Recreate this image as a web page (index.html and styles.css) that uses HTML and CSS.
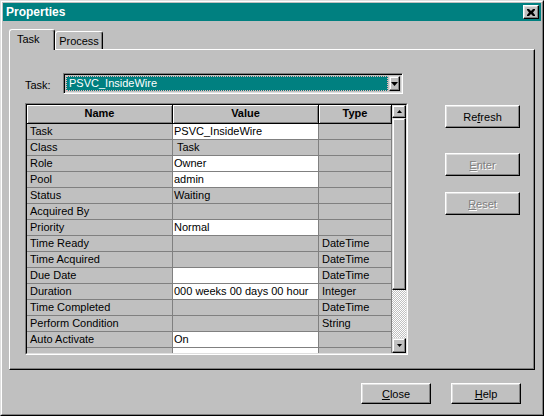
FILE: index.html
```html
<!DOCTYPE html>
<html>
<head>
<meta charset="utf-8">
<link rel="stylesheet" href="styles.css">
</head>
<body>
<div class="window">
  <div class="frame">
    <div class="titlebar">
      <span class="title">Properties</span>
      <div class="xbtn">
        <svg width="8" height="7" viewBox="0 0 8 7"><path d="M0 0h2l2 2 2-2h2v1l-2 2.5 2 2.5v1h-2l-2-2-2 2h-2v-1l2-2.5-2-2.5z" fill="#000"/></svg>
      </div>
    </div>
    <div class="content">
      <div class="tabs">
        <div class="tab active">Task</div>
        <div class="tab">Process</div>
      </div>
      <div class="panel">
        <div class="main">
          <div class="combo-row">
            <span class="label">Task:</span>
            <div class="combo">
              <div class="combo-field">PSVC_InsideWire</div>
              <div class="combo-btn">
                <svg width="7" height="4" viewBox="0 0 7 4"><path d="M0 0h7l-3.5 4z" fill="#000"/></svg>
              </div>
            </div>
          </div>
          <div class="grid">
            <div class="grid-inner">
              <div class="table">
                <div class="h">Name</div><div class="h">Value</div><div class="h">Type</div>
                <div class="c">Task</div><div class="c v w">PSVC_InsideWire</div><div class="c"></div>
                <div class="c">Class</div><div class="c v ind">Task</div><div class="c"></div>
                <div class="c">Role</div><div class="c v w">Owner</div><div class="c"></div>
                <div class="c">Pool</div><div class="c v w">admin</div><div class="c"></div>
                <div class="c">Status</div><div class="c v">Waiting</div><div class="c"></div>
                <div class="c">Acquired By</div><div class="c v"></div><div class="c"></div>
                <div class="c">Priority</div><div class="c v w">Normal</div><div class="c"></div>
                <div class="c">Time Ready</div><div class="c v"></div><div class="c">DateTime</div>
                <div class="c">Time Acquired</div><div class="c v"></div><div class="c">DateTime</div>
                <div class="c">Due Date</div><div class="c v w"></div><div class="c">DateTime</div>
                <div class="c">Duration</div><div class="c v w">000 weeks 00 days 00 hour</div><div class="c">Integer</div>
                <div class="c">Time Completed</div><div class="c v"></div><div class="c">DateTime</div>
                <div class="c">Perform Condition</div><div class="c v"></div><div class="c">String</div>
                <div class="c">Auto Activate</div><div class="c v w">On</div><div class="c"></div>
                <div class="c"></div><div class="c v w"></div><div class="c"></div>
              </div>
              <div class="scroll">
                <div class="sb-btn up">
                  <svg width="5" height="3" viewBox="0 0 5 3"><path d="M2.5 0L5 3H0z" fill="#000"/></svg>
                </div>
                <div class="sb-thumb"></div>
                <div class="sb-track"></div>
                <div class="sb-btn down">
                  <svg width="5" height="3" viewBox="0 0 5 3"><path d="M0 0h5L2.5 3z" fill="#000"/></svg>
                </div>
              </div>
            </div>
          </div>
        </div>
        <div class="side">
          <div class="btn refresh">Re<u>f</u>resh</div>
          <div class="btn disabled enter"><u>E</u>nter</div>
          <div class="btn disabled reset"><u>R</u>eset</div>
        </div>
      </div>
      <div class="footer">
        <div class="btn fbtn"><u>C</u>lose</div>
        <div class="btn fbtn"><u>H</u>elp</div>
      </div>
    </div>
  </div>
</div>
</body>
</html>
```
FILE: styles.css
```css
* { box-sizing: border-box; }
html, body { margin: 0; padding: 0; }
body {
  width: 544px;
  height: 416px;
  overflow: hidden;
  background: #c0c0c0;
  font-family: "Liberation Sans", Arial, sans-serif;
  font-size: 11px;
  color: #000;
}
.window {
  width: 544px;
  height: 416px;
  border: 1px solid;
  border-color: #dfdfdf #000 #000 #dfdfdf;
}
.frame {
  height: 100%;
  border: 1px solid;
  border-color: #fff #808080 #808080 #fff;
  padding: 1px;
  display: flex;
  flex-direction: column;
}
.titlebar {
  flex: none;
  height: 18px;
  background: #008080;
  display: flex;
  align-items: center;
  justify-content: space-between;
  padding: 0 2px 0 3px;
}
.title {
  color: #fff;
  font-weight: bold;
  font-size: 12px;
}
.xbtn {
  width: 16px;
  height: 14px;
  background: #c0c0c0;
  border: 1px solid;
  border-color: #fff #000 #000 #fff;
  box-shadow: inset -1px -1px #808080, inset 1px 1px #dfdfdf;
  display: flex;
  align-items: center;
  justify-content: center;
}
.content {
  flex: 1;
  display: flex;
  flex-direction: column;
  padding: 8px 6px 0 6px;
}
.tabs {
  display: flex;
  align-items: flex-end;
  height: 20px;
}
.tab {
  height: 18px;
  border: 1px solid;
  border-bottom: none;
  border-color: #fff #000 #000 #fff;
  border-radius: 3px 3px 0 0;
  box-shadow: inset -1px 0 #808080;
  padding-top: 3px;
  text-align: center;
  width: 48px;
}
.tab.active {
  position: relative;
  z-index: 1;
  height: 21px;
  margin-bottom: -1px;
  width: 46px;
  text-align: left;
  padding-left: 7px;
  padding-top: 3px;
  background: #c0c0c0;
}
.panel {
  height: 321px;
  border: 1px solid;
  border-color: #fff #000 #000 #fff;
  box-shadow: inset -1px -1px #808080;
  display: flex;
  padding: 23px 0 0 15px;
}
.main {
  width: 383px;
  display: flex;
  flex-direction: column;
}
.combo-row {
  display: flex;
  height: 21px;
}
.label {
  width: 38px;
  padding-top: 6px;
}
.combo {
  width: 340px;
  height: 21px;
  border: 1px solid;
  border-color: #808080 #fff #fff #808080;
  box-shadow: inset 1px 1px #000, inset -1px -1px #dfdfdf;
  padding: 2px 2px 2px 2px;
  display: flex;
}
.combo-field {
  flex: 1;
  background: #008080;
  color: #fff;
  border: 1px dotted #f0b8b8;
  padding-left: 2px;
  line-height: 13px;
  margin-right: 1px;
}
.combo-btn {
  width: 11px;
  background: #c0c0c0;
  border: 1px solid;
  border-color: #dfdfdf #000 #000 #dfdfdf;
  box-shadow: inset -1px -1px #808080, inset 1px 1px #fff;
  display: flex;
  align-items: center;
  justify-content: center;
}
.grid {
  margin-top: 9px;
  width: 383px;
  height: 252px;
  border: 1px solid;
  border-color: #808080 #fff #fff #808080;
}
.grid-inner {
  height: 100%;
  border: 1px solid;
  border-color: #000 #dfdfdf #dfdfdf #000;
  display: flex;
  overflow: hidden;
}
.table {
  width: 365px;
  display: grid;
  grid-template-columns: 146px 146px 73px;
  grid-template-rows: 19px;
  grid-auto-rows: 16px;
  align-content: start;
}
.h {
  font-weight: bold;
  text-align: center;
  line-height: 17px;
  border-right: 1px solid #000;
  border-bottom: 1px solid #000;
  box-shadow: inset 1px 1px #fff, inset -1px -1px #808080;
}
.c {
  border-right: 1px solid #808080;
  border-bottom: 1px solid #808080;
  padding-left: 3px;
  line-height: 15px;
  white-space: nowrap;
  overflow: hidden;
}
.c.v { padding-left: 1px; }
.c.ind { padding-left: 4px; }
.c.w { background: #fff; }
.scroll {
  width: 14px;
  display: flex;
  flex-direction: column;
}
.sb-btn, .sb-thumb {
  background: #c0c0c0;
  border: 1px solid;
  border-color: #dfdfdf #000 #000 #dfdfdf;
  box-shadow: inset -1px -1px #808080, inset 1px 1px #fff;
  display: flex;
  align-items: center;
  justify-content: center;
}
.sb-btn.up { height: 13px; }
.sb-btn.down { height: 15px; }
.sb-thumb { height: 172px; }
.sb-track {
  flex: 1;
  background: repeating-conic-gradient(#c0c0c0 0 25%, #fff 0 50%) 0 0 / 2px 2px;
}
.side {
  margin-left: 37px;
  padding-top: 32px;
  display: flex;
  flex-direction: column;
}
.btn {
  background: #c0c0c0;
  border: 1px solid;
  border-color: #fff #000 #000 #fff;
  box-shadow: inset -1px -1px #808080, inset 1px 1px #dfdfdf;
  display: flex;
  align-items: center;
  justify-content: center;
}
.side .btn { width: 75px; height: 23px; }
.enter { margin-top: 25px; }
.reset { margin-top: 16px; }
.btn.disabled {
  color: #808080;
  text-shadow: 1px 1px 0 #fff;
}
.footer {
  margin-top: 13px;
  display: flex;
  justify-content: flex-end;
  gap: 20px;
  padding-right: 14px;
}
.fbtn { width: 70px; height: 21px; }
```
